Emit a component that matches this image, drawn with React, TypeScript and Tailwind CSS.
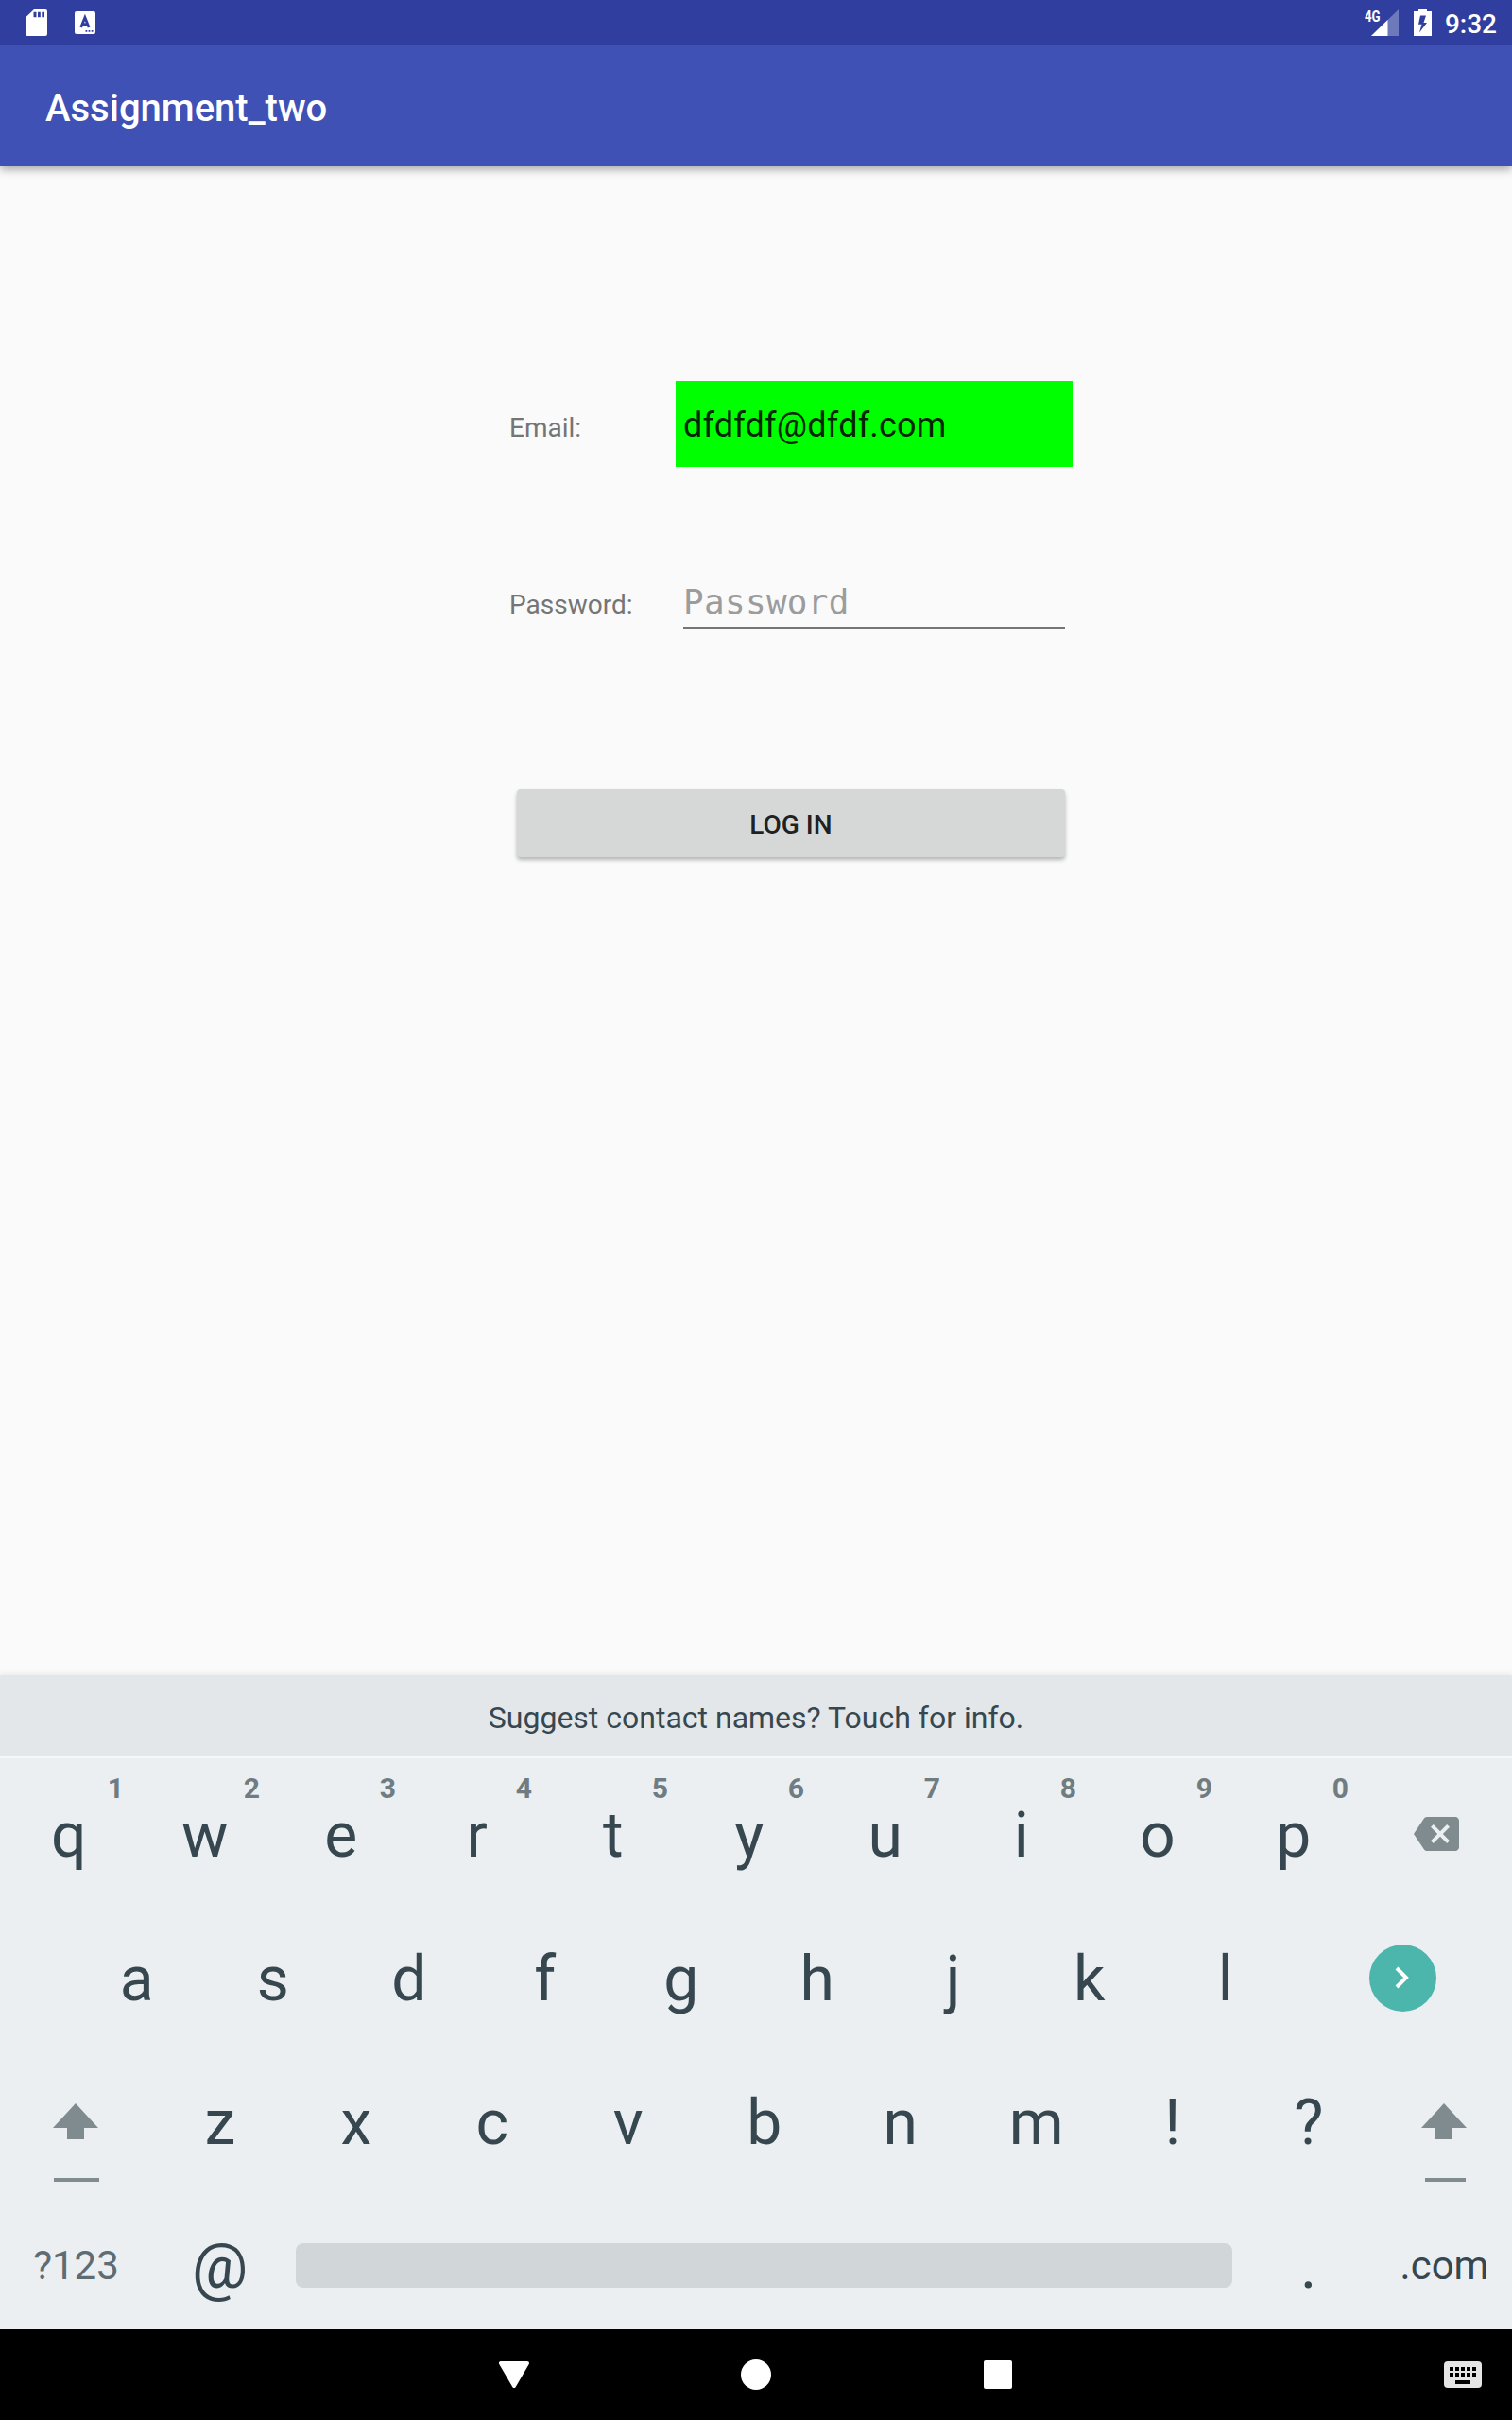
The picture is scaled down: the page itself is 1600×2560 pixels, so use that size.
import React from "react";

function SdCardIcon() {
  return (
    <svg className="h-7 w-[23px]" viewBox="0 0 23 28">
      <path
        fill="#fff"
        fillRule="evenodd"
        d="M9 0h12a2 2 0 0 1 2 2v24a2 2 0 0 1-2 2H2a2 2 0 0 1-2-2V8.500zM8.500 2.800v5.500h3v-5.500zM13 2.800v5.500h2.800v-5.500zM17.300 2.800v5.500h2.700v-5.500z"
      />
    </svg>
  );
}

function InputMethodIcon() {
  return (
    <svg className="h-6 w-[22px]" viewBox="0 0 22 24">
      <rect width="22" height="24" rx="2" fill="#fff" />
      <path d="M6.700 17l4.200-10.500 4.200 10.500M8.500 13.700h4.800" fill="none" stroke="#303f9f" strokeWidth="2.800" />
      <path d="M11.500 20h1.800v1.800h-1.800zM14.600 20h1.800v1.800h-1.800zM17.700 20h1.800v1.800h-1.800z" fill="#303f9f" />
    </svg>
  );
}

function SignalIcon() {
  return (
    <div className="relative h-7 w-9">
      <svg className="absolute top-0 right-0 h-7 w-[29px]" viewBox="0 0 29 28">
        <path d="M29 0v28H0z" fill="#fff" fillOpacity=".3" />
        <path d="M17.500 11v17H0z" fill="#fff" />
      </svg>
      <span className="absolute -top-px left-0 origin-left scale-x-[0.78] text-[17px] leading-4 font-bold">4G</span>
    </div>
  );
}

function BatteryIcon() {
  return (
    <svg className="h-[29px] w-[19px]" viewBox="0 0 19 29">
      <path
        fill="#fff"
        fillRule="evenodd"
        d="M5 0h9v3h5v26H0V3h5zM7 7.500L5 16.700h3.500L6 25.500l8-10.500h-3.500l2.500-7.500z"
      />
    </svg>
  );
}

function BackspaceIcon() {
  return (
    <svg className="size-12" viewBox="0 0 24 24">
      <path
        fill="#808b8f"
        d="M22 3H7c-.69 0-1.230.35-1.590.88L0 12l5.410 8.110c.36.53.9.89 1.590.89h15c1.100 0 2-.9 2-2V5c0-1.100-.9-2-2-2zm-3 12.590L17.590 17 14 13.410 10.410 17 9 15.590 12.590 12 9 8.410 10.410 7 14 10.590 17.590 7 19 8.410 15.410 12 19 15.590z"
      />
    </svg>
  );
}

function Key({ label, hint }: { label: string; hint?: string }) {
  return (
    <div className="relative w-36 shrink-0 pl-[1.500px] text-center text-[66px] leading-[163px] text-[#37474f]">
      {label}
      {hint && (
        <span className="absolute top-0 right-[13px] text-[30px] leading-[63px] font-bold text-[#6f7c81]">{hint}</span>
      )}
    </div>
  );
}

function ShiftKey({ width, bar }: { width: string; bar: string }) {
  return (
    <div className={"flex shrink-0 flex-col items-center pt-[61px] " + width}>
      <svg className="h-[38px] w-12" viewBox="0 0 48 38">
        <path d="M24 0l24 26H33v12H15V26H0z" fill="#808b8f" />
      </svg>
      <div className={"mt-[41px] ml-[2px] h-1 bg-[#808b8f] " + bar} />
    </div>
  );
}

const topRow = "qwertyuiop".split("");
const hints = "1234567890".split("");

export default function App() {
  return (
    <div className="flex h-[2560px] w-[1600px] flex-col overflow-hidden bg-[#fafafa] font-['Roboto',sans-serif]">
      <div className="relative z-20 flex h-12 shrink-0 items-center justify-between bg-[#303f9f] pr-4 pl-[26.500px] text-white">
        <div className="flex items-center gap-[29.500px]">
          <SdCardIcon />
          <InputMethodIcon />
        </div>
        <div className="flex items-center">
          <SignalIcon />
          <div className="-mt-px ml-4 flex">
            <BatteryIcon />
          </div>
          <span className="mt-[4px] ml-[14px] text-[28px] leading-8 font-medium">9:32</span>
        </div>
      </div>
      <header className="z-10 flex h-32 shrink-0 items-center bg-[#3f51b5] pl-12 text-[40px] font-medium text-white shadow-[0_3px_9px_rgba(0,0,0,0.35)]">
        <h1 className="mt-1.5">Assignment_two</h1>
      </header>

      <main className="flex grow flex-col pt-[227px] pl-[539px]">
        <div className="flex h-[91px]">
          <label className="w-44 pt-[4px] text-[28px] leading-[91px] text-[#757575]">Email:</label>
          <div className="w-[420px] bg-[#00ff00] pl-2 text-[36px] leading-[95px] tracking-[0.2px] text-black/87">
            dfdfdf@dfdf.com
          </div>
        </div>
        <div className="mt-[96px] flex h-[91px]">
          <label className="w-44 pt-[4px] text-[28px] leading-[91px] text-[#757575]">Password:</label>
          <div className="mx-2 h-[75px] w-[404px] border-b-2 border-[#757575] font-['DejaVu_Sans_Mono',monospace] text-[36px] leading-[94px] tracking-[0.3px] text-[#9c9c9c]">
            Password
          </div>
        </div>
        <button className="mt-[154px] ml-2 h-[72px] w-[580px] rounded-[4px] bg-[#d6d8d7] pt-[3px] text-[28px] font-medium text-black/87 shadow-[0_3px_4px_rgba(0,0,0,0.28)]">
          LOG IN
        </button>
      </main>

      <section className="h-[692px] shrink-0 bg-[#ebeff2] shadow-[0_-2px_5px_rgba(0,0,0,0.06)]">
        <div className="h-[88px] border-b-2 border-[#f6f7f9] bg-[#e3e7ea] text-center text-[32px] leading-[90px] text-[#37474f]">
          Suggest contact names? Touch for info.
        </div>
        <div className="flex h-[152px]">
          {topRow.map((k, i) => (
            <Key key={k} label={k} hint={hints[i]} />
          ))}
          <div className="flex h-40 grow items-center justify-center">
            <BackspaceIcon />
          </div>
        </div>
        <div className="flex h-[152px] pl-[72px]">
          {"asdfghjkl".split("").map((k) => (
            <Key key={k} label={k} />
          ))}
          <div className="flex h-40 grow items-center justify-center">
            <div className="flex size-[71px] items-center justify-center rounded-full bg-[#4db6ac]">
              <svg className="h-6 w-4" viewBox="0 0 16 24">
                <path d="M2 2l10 10L2 22" fill="none" stroke="#fff" strokeWidth="4" />
              </svg>
            </div>
          </div>
        </div>
        <div className="flex h-[152px]">
          <ShiftKey width="w-40" bar="w-12" />
          {"zxcvbnm!?".split("").map((k) => (
            <Key key={k} label={k} />
          ))}
          <ShiftKey width="w-36" bar="w-[43px]" />
        </div>
        <div className="flex h-[148px]">
          <div className="w-40 shrink-0 pl-px text-center text-[42px] leading-[161px] text-[#5f6c72]">?123</div>
          <Key label="@" />
          <div className="mx-[8.500px] mt-[57px] h-[47px] grow rounded-lg bg-[#d1d6d9]" />
          <Key label="." />
          <div className="w-36 shrink-0 pl-px text-center text-[42px] leading-[161px] text-[#37474f]">.com</div>
        </div>
      </section>

      <nav className="flex h-24 shrink-0 items-center bg-black pr-8 pl-[528px]">
        <svg className="h-7 w-8" viewBox="0 0 32 28">
          <path d="M2 2h28L16 26z" fill="#fff" stroke="#fff" strokeWidth="4" strokeLinejoin="round" />
        </svg>
        <div className="ml-[224px] size-8 rounded-full bg-white" />
        <div className="ml-[225px] size-[30px] rounded-[2px] bg-white" />
        <svg className="ml-auto h-7 w-10" viewBox="0 0 40 28">
          <rect width="40" height="28" rx="4" fill="#e6e6e6" />
          <path
            d="M6 6h4v4H6zM12 6h4v4h-4zM18 6h4v4h-4zM24 6h4v4h-4zM30 6h4v4h-4zM6 12h4v4H6zM12 12h4v4h-4zM18 12h4v4h-4zM24 12h4v4h-4zM30 12h4v4h-4zM12 20h16v4H12z"
            fill="#000"
          />
        </svg>
      </nav>
    </div>
  );
}
